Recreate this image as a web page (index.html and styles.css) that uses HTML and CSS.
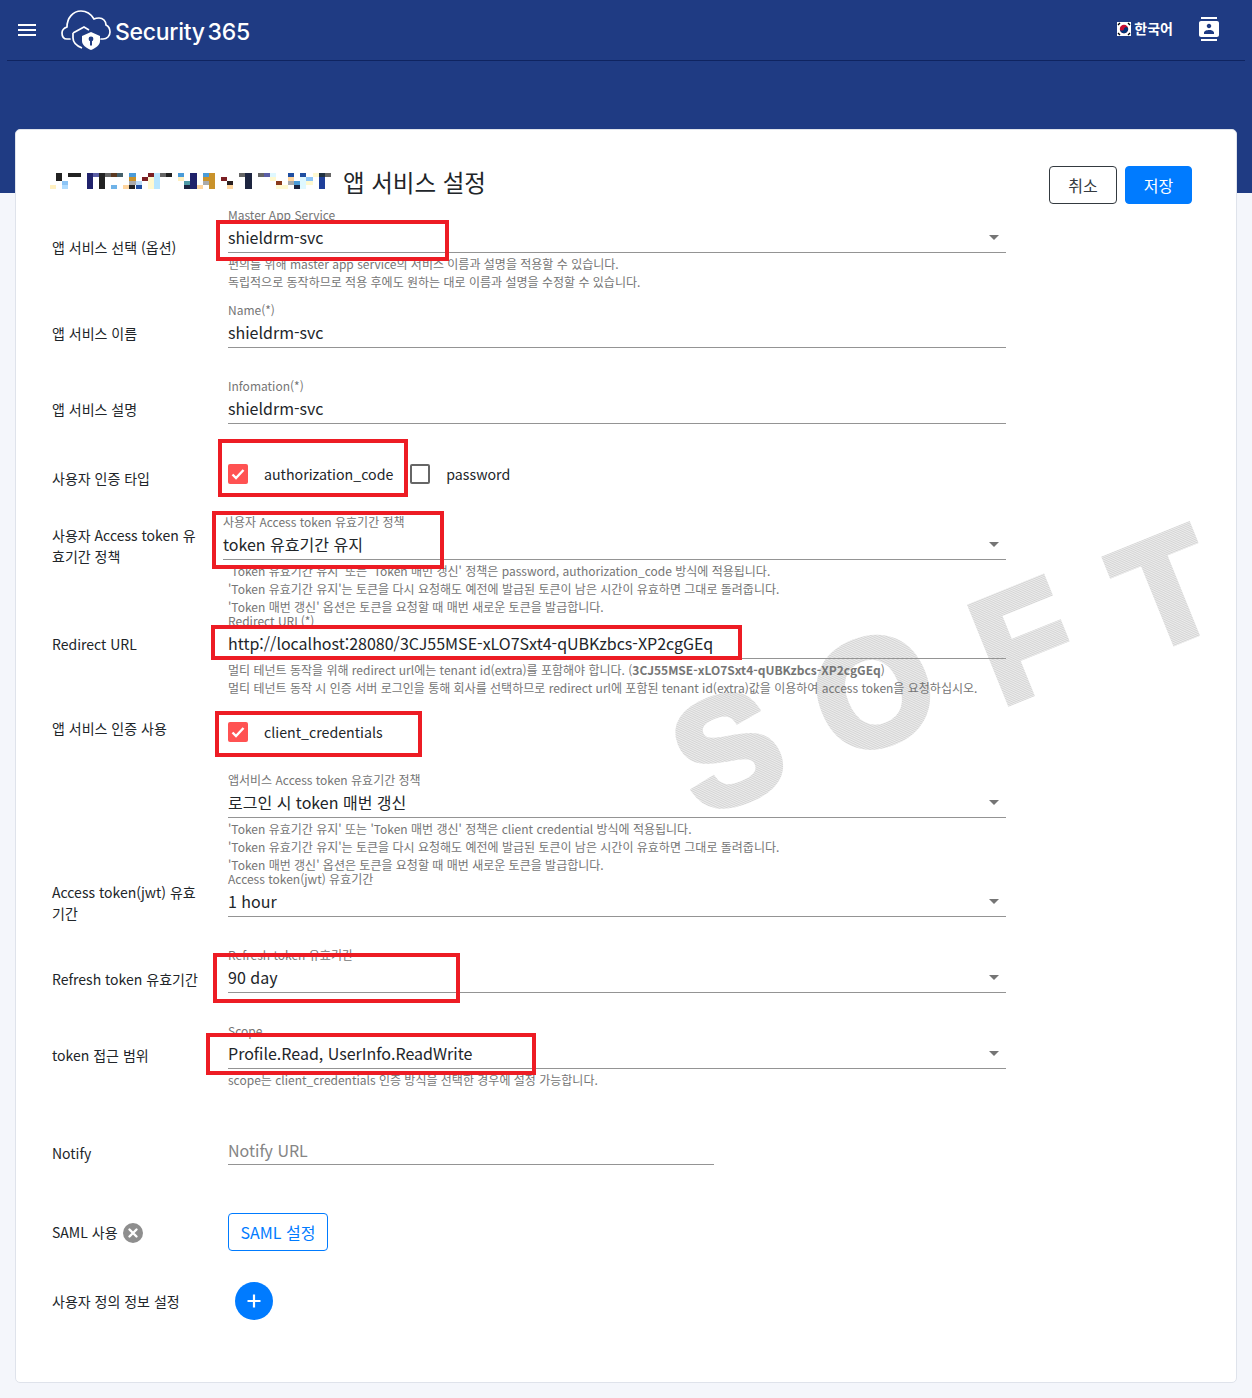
FILE: index.html
```html
<!DOCTYPE html>
<html lang="ko">
<head>
    <meta charset="UTF-8">
    <meta name="viewport" content="width=device-width, initial-scale=1.0">
    <title>Security365</title>
    <link rel="stylesheet" href="styles.css">
</head>
<body>
    <div class="banner">
        <header class="topbar">
            <div class="brand">
                <svg class="menu-icon" viewBox="0 0 24 24"><path fill="#fff" d="M3 18h18v-2H3v2zm0-5h18v-2H3v2zm0-7v2h18V6H3z"/></svg>
                <svg class="logo-icon" viewBox="0 0 50 40">
                    <path fill="none" stroke="#fff" stroke-width="1.7" stroke-linecap="round" d="M9 29H6C2.500 29 1 26 1 23c0-3 2-5 5-6C6 8 12 1 20 1c6 0 10 3 13 8 2-1 3-1 5-1 4 0 7 3 7 7 2 1 4 4 4 7 0 4-3 7-7 7h-2"/>
                    <path fill="none" stroke="#fff" stroke-width="1.7" d="M12 23l11-6 5 3M12 23v5c0 5 4 8 9 10"/>
                    <path fill="#fff" d="M30 22l9 4v5c0 4-4 7-9 9-5-2-9-5-9-9v-5z"/>
                    <circle cx="30" cy="29" r="2.400" fill="#1f3b83"/>
                    <rect x="29" y="29" width="2" height="6.500" fill="#1f3b83"/>
                </svg>
                <span class="logo-text">Security<span class="logo-num">365</span></span>
            </div>
            <div class="top-right">
                <svg class="flag" viewBox="0 0 14 14">
                    <rect width="14" height="14" fill="#fff"/>
                    <circle cx="7" cy="7" r="4.200" fill="#c60c30"/>
                    <path fill="#003478" d="M2.800 7a4.200 4.200 0 0 0 8.400 0c0-1-1-2-2.100-2S7 6 7 7 6 8.500 4.900 8.500 2.800 8 2.800 7z"/>
                    <path stroke="#000" stroke-width="1.400" d="M1 3l2-2M11 1l2 2M1 11l2 2M11 13l2-2"/>
                </svg>
                <span class="lang">한국어</span>
                <svg class="contact-icon" viewBox="0 0 24 24"><path fill="#fff" d="M20 0H4v2h16V0zM4 24h16v-2H4v2zM20 4H4c-1.100 0-2 .9-2 2v12c0 1.100.9 2 2 2h16c1.100 0 2-.9 2-2V6c0-1.100-.9-2-2-2zm-8 2.750c1.240 0 2.250 1.010 2.250 2.250s-1.010 2.250-2.250 2.250S9.750 10.240 9.750 9 10.760 6.750 12 6.750zM17 17H7v-1.500c0-1.670 3.330-2.500 5-2.500s5 .83 5 2.500V17z"/></svg>
            </div>
        </header>
    </div>

    <main class="card">
        <svg class="watermark" viewBox="0 0 600 400">
            <defs>
                <pattern id="hatch" width="2" height="1.700" patternUnits="userSpaceOnUse" patternTransform="rotate(-22)">
                    <rect width="2" height="1.200" fill="#d4d4d4"/>
                </pattern>
                <mask id="soft">
                    <g fill="#fff" stroke="#fff" stroke-width="7" font-family="'Liberation Sans', sans-serif" font-weight="700" font-size="150">
                        <text transform="translate(81 352) rotate(-22)">S</text>
                        <text transform="translate(219 297) rotate(-22)">O</text>
                        <text transform="translate(381 241) rotate(-22)">F</text>
                        <text transform="translate(523 190) rotate(-22)">T</text>
                    </g>
                </mask>
            </defs>
            <rect width="600" height="400" fill="url(#hatch)" mask="url(#soft)"/>
        </svg>

        <div class="title-bar">
            <h1 class="page-title">
                <svg class="blur-name" viewBox="0 0 282 18" shape-rendering="crispEdges">
                    <path fill="#222" d="M6 1h6v8H6zM18 1h13v4H18zM49 1h6v16h-6zM116 1h6v4h-6zM79 13h6v4h-6z"/>
                    <path fill="#20226b" d="M37 1h6v16h-6zM140 1h7v16h-7z"/>
                    <path fill="#1d2540" d="M195 1h7v16h-7zM244 13h6v4h-6zM134 13h6v4h-6z"/>
                    <path fill="#5b5ea6" d="M43 1h6v4h-6zM214 1h6v4h-6z"/>
                    <path fill="#666" d="M55 1h6v4h-6zM110 1h6v4h-6zM189 1h6v4h-6zM208 1h6v4h-6zM275 1h6v4h-6z"/>
                    <path fill="#5c3a22" d="M61 1h6v4h-6z"/>
                    <path fill="#44606a" d="M67 1h6v4h-6z"/>
                    <path fill="#4a9bd8" d="M79 1h7v4h-7zM128 1h6v4h-6zM153 1h6v4h-6zM244 9h6v4h-6z"/>
                    <path fill="#c9922b" d="M79 5h7v4h-7zM153 5h6v4h-6zM159 1h6v16h-6z"/>
                    <path fill="#aaa" d="M79 9h7v4h-7zM153 9h6v4h-6zM238 9h6v4h-6z"/>
                    <path fill="#bcdcf8" d="M86 9h6v4h-6z"/>
                    <path fill="#1f4ea1" d="M86 13h6v4h-6zM238 1h6v4h-6zM250 1h6v4h-6z"/>
                    <path fill="#6fb3e8" d="M61 13h6v4h-6z"/>
                    <path fill="#ffd59e" d="M73 13h6v4h-6zM147 13h6v4h-6zM177 13h6v4h-6zM238 5h6v4h-6z"/>
                    <path fill="#7b1f24" d="M98 1h6v4h-6zM92 5h6v4h-6zM171 5h6v4h-6z"/>
                    <path fill="#fff9d0" d="M98 5h6v12h-6zM220 5h6v4h-6zM226 13h12v4h-12zM256 9h7v4h-7zM263 1h6v4h-6z"/>
                    <path fill="#b8e6ff" d="M104 1h6v16h-6z"/>
                    <path fill="#dff8ff" d="M220 1h6v4h-6zM250 5h6v12h-6z"/>
                    <path fill="#fff0c0" d="M128 5h6v4h-6zM0 13h6v4H0z"/>
                    <path fill="#4d9aa5" d="M134 9h6v4h-6z"/>
                    <path fill="#8cc4f5" d="M12 9h6v4h-6zM256 5h7v4h-7z"/>
                    <path fill="#b0dcff" d="M12 13h6v4h-6z"/>
                    <path fill="#2a1f1f" d="M177 9h6v4h-6z"/>
                    <path fill="#8a3a1a" d="M226 9h6v4h-6z"/>
                    <path fill="#1f3040" d="M269 1h6v4h-6z"/>
                    <path fill="#1f3f9a" d="M269 5h6v12h-6z"/>
                </svg>
                <span>앱 서비스 설정</span>
            </h1>
            <div class="actions">
                <button class="btn btn-cancel">취소</button>
                <button class="btn btn-save">저장</button>
            </div>
        </div>

        <div class="row row-95">
            <div class="row-label">앱 서비스 선택 (옵션)</div>
            <div>
                <div class="field">
                    <span class="field-label">Master App Service</span>
                    <div class="field-value">shieldrm-svc<i class="arrow"></i></div>
                </div>
                <p class="help">편의를 위해 master app service의 서비스 이름과 설명을 적용할 수 있습니다.<br>독립적으로 동작하므로 적용 후에도 원하는 대로 이름과 설명을 수정할 수 있습니다.</p>
            </div>
        </div>

        <div class="row">
            <div class="row-label">앱 서비스 이름</div>
            <div class="field">
                <span class="field-label">Name(*)</span>
                <div class="field-value">shieldrm-svc</div>
            </div>
        </div>

        <div class="row">
            <div class="row-label">앱 서비스 설명</div>
            <div class="field">
                <span class="field-label">Infomation(*)</span>
                <div class="field-value">shieldrm-svc</div>
            </div>
        </div>

        <div class="row row-60">
            <div class="row-label label-check">사용자 인증 타입</div>
            <div class="checks">
                <span class="check-item">
                    <i class="checkbox checked"><svg viewBox="0 0 20 20"><path fill="none" stroke="#fff" stroke-width="2.400" d="M4.500 10.500l3.500 3.500 7.500-8"/></svg></i>authorization_code
                </span>
                <span class="check-item">
                    <i class="checkbox"></i>password
                </span>
            </div>
        </div>

        <div class="row row-99">
            <div class="row-label label-two">사용자 Access token 유효기간 정책</div>
            <div>
                <div class="field field-shift">
                    <span class="field-label">사용자 Access token 유효기간 정책</span>
                    <div class="field-value">token 유효기간 유지<i class="arrow"></i></div>
                </div>
                <p class="help">'Token 유효기간 유지' 또는 'Token 매번 갱신' 정책은 password, authorization_code 방식에 적용됩니다.<br>'Token 유효기간 유지'는 토큰을 다시 요청해도 예전에 발급된 토큰이 남은 시간이 유효하면 그대로 돌려줍니다.<br>'Token 매번 갱신' 옵션은 토큰을 요청할 때 매번 새로운 토큰을 발급합니다.</p>
            </div>
        </div>

        <div class="row row-98">
            <div class="row-label">Redirect URL</div>
            <div>
                <div class="field">
                    <span class="field-label">Redirect URL(*)</span>
                    <div class="field-value">http://localhost:28080/3CJ55MSE-xLO7Sxt4-qUBKzbcs-XP2cgGEq</div>
                </div>
                <p class="help">멀티 테넌트 동작을 위해 redirect url에는 tenant id(extra)를 포함해야 합니다. (<b>3CJ55MSE-xLO7Sxt4-qUBKzbcs-XP2cgGEq</b>)<br>멀티 테넌트 동작 시 인증 서버 로그인을 통해 회사를 선택하므로 redirect url에 포함된 tenant id(extra)값을 이용하여 access token을 요청하십시오.</p>
            </div>
        </div>

        <div class="row row-61">
            <div class="row-label label-top">앱 서비스 인증 사용</div>
            <div class="checks">
                <span class="check-item">
                    <i class="checkbox checked"><svg viewBox="0 0 20 20"><path fill="none" stroke="#fff" stroke-width="2.400" d="M4.500 10.500l3.500 3.500 7.500-8"/></svg></i>client_credentials
                </span>
            </div>
        </div>

        <div class="row row-99">
            <div class="row-label"></div>
            <div>
                <div class="field">
                    <span class="field-label">앱서비스 Access token 유효기간 정책</span>
                    <div class="field-value">로그인 시 token 매번 갱신<i class="arrow"></i></div>
                </div>
                <p class="help">'Token 유효기간 유지' 또는 'Token 매번 갱신' 정책은 client credential 방식에 적용됩니다.<br>'Token 유효기간 유지'는 토큰을 다시 요청해도 예전에 발급된 토큰이 남은 시간이 유효하면 그대로 돌려줍니다.<br>'Token 매번 갱신' 옵션은 토큰을 요청할 때 매번 새로운 토큰을 발급합니다.</p>
            </div>
        </div>

        <div class="row">
            <div class="row-label label-two">Access token(jwt) 유효기간</div>
            <div class="field">
                <span class="field-label">Access token(jwt) 유효기간</span>
                <div class="field-value">1 hour<i class="arrow"></i></div>
            </div>
        </div>

        <div class="row">
            <div class="row-label label-low">Refresh token 유효기간</div>
            <div class="field">
                <span class="field-label">Refresh token 유효기간</span>
                <div class="field-value">90 day<i class="arrow"></i></div>
            </div>
        </div>

        <div class="row row-96">
            <div class="row-label label-low">token 접근 범위</div>
            <div>
                <div class="field">
                    <span class="field-label">Scope</span>
                    <div class="field-value">Profile.Read, UserInfo.ReadWrite<i class="arrow"></i></div>
                </div>
                <p class="help">scope는 client_credentials 인증 방식을 선택한 경우에 설정 가능합니다.</p>
            </div>
        </div>

        <div class="row row-93">
            <div class="row-label label-notify">Notify</div>
            <div class="field field-short">
                <span class="field-label"></span>
                <div class="field-value placeholder">Notify URL</div>
            </div>
        </div>

        <div class="row row-69">
            <div class="row-label label-saml">SAML 사용
                <svg class="saml-off" viewBox="0 0 20 20"><circle cx="10" cy="10" r="10" fill="#8e8e8e"/><path stroke="#fff" stroke-width="2.400" stroke-linecap="round" d="M6.500 6.500l7 7M13.500 6.500l-7 7"/></svg>
            </div>
            <div><button class="btn btn-saml">SAML 설정</button></div>
        </div>

        <div class="row row-60">
            <div class="row-label label-custom">사용자 정의 정보 설정</div>
            <div><button class="btn-add"><svg viewBox="0 0 38 38"><path stroke="#fff" stroke-width="2.200" d="M19 12.500v13M12.500 19h13"/></svg></button></div>
        </div>

        <i class="mark mark-1"></i>
        <i class="mark mark-2"></i>
        <i class="mark mark-3"></i>
        <i class="mark mark-4"></i>
        <i class="mark mark-5"></i>
        <i class="mark mark-6"></i>
        <i class="mark mark-7"></i>
    </main>
</body>
</html>
```

FILE: styles.css
```css
* {
    box-sizing: border-box;
}
html, body {
    margin: 0;
    padding: 0;
}
body {
    height: 1398px;
    overflow: hidden;
    background: #f4f6fb;
    color: #212529;
    font-family: "Noto Sans CJK KR", "Noto Sans", sans-serif;
    font-size: 14px;
}
.banner {
    height: 193px;
    padding: 0 7px;
    background: #1f3b83;
}
.topbar {
    display: flex;
    justify-content: space-between;
    align-items: center;
    height: 61px;
    border-bottom: 1px solid #0f2460;
}
.brand {
    display: flex;
    align-items: center;
}
.menu-icon {
    width: 24px;
    height: 24px;
    margin-left: 8px;
}
.logo-icon {
    width: 50px;
    height: 40px;
    margin-left: 22px;
}
.logo-text {
    margin: 4px 0 0 4px;
    color: #fff;
    font-family: Inter, sans-serif;
    font-size: 23px;
    font-weight: 500;
    letter-spacing: -0.3px;
}
.logo-num {
    margin-left: 3px;
}
.top-right {
    display: flex;
    align-items: center;
    padding: 0 24px 2px 0;
}
.flag {
    width: 14px;
    height: 14px;
}
.lang {
    margin: -2px 0 0 3px;
    color: #fff;
    font-size: 14px;
    font-weight: 700;
}
.contact-icon {
    width: 24px;
    height: 24px;
    margin-left: 24px;
}

.card {
    position: relative;
    width: 1222px;
    height: 1254px;
    margin: -64px 0 0 15px;
    padding: 36px 0 0 36px;
    background: #fff;
    border: 1px solid #dfe3eb;
    border-radius: 5px;
}
.watermark {
    position: absolute;
    left: 604px;
    top: 335px;
    width: 600px;
    height: 400px;
}
.title-bar {
    position: relative;
    display: flex;
    justify-content: space-between;
    align-items: flex-start;
    height: 42px;
    padding-right: 44px;
}
.page-title {
    display: flex;
    align-items: center;
    margin: 0;
    font-size: 23.5px;
    font-weight: 400;
    line-height: 32px;
}
.blur-name {
    width: 282px;
    height: 18px;
    margin: -2px 11px 0 -2px;
}
.actions {
    display: flex;
    gap: 8px;
}
.btn {
    height: 38px;
    padding: 0;
    border-radius: 4px;
    background: #fff;
    font-family: inherit;
    font-size: 16px;
}
.btn-cancel {
    width: 68px;
    border: 1px solid #343a40;
    color: #343a40;
}
.btn-save {
    width: 67px;
    border: 1px solid #007bff;
    background: #007bff;
    color: #fff;
}
.btn-saml {
    width: 100px;
    border: 1px solid #007bff;
    color: #007bff;
}
.btn-add {
    display: block;
    width: 38px;
    height: 38px;
    margin-left: 7px;
    padding: 0;
    border: 0;
    border-radius: 50%;
    background: #007bff;
}

.row {
    position: relative;
    display: grid;
    grid-template-columns: 176px 778px;
    height: 76px;
}
.row-60 { height: 60px; }
.row-61 { height: 61px; }
.row-69 { height: 69px; }
.row-93 { height: 93px; }
.row-95 { height: 95px; }
.row-96 { height: 96px; }
.row-98 { height: 98px; }
.row-99 { height: 99px; }
.row-label {
    padding: 20px 20px 0 0;
    font-size: 14px;
    line-height: 21px;
}
.row-95 > .row-label { padding-top: 29px; }
.label-check { padding-top: 13px; }
.label-two { padding-top: 10px; }
.label-low { padding-top: 21px; }
.label-top { padding-top: 6px; }
.label-notify { padding-top: 23px; }
.label-saml {
    display: flex;
    align-items: center;
    gap: 5px;
    align-self: start;
    padding: 9px 0 0;
}
.label-custom { padding-top: 9px; }
.saml-off {
    width: 20px;
    height: 20px;
}

.field {
    height: 45px;
    border-bottom: 1px solid #949494;
}
.field-shift {
    margin-left: -5px;
}
.field-short {
    width: 486px;
}
.field-label {
    display: block;
    height: 15px;
    padding-bottom: 1px;
    color: #757575;
    font-size: 12px;
    line-height: 13px;
}
.field-value {
    position: relative;
    height: 29px;
    color: #212529;
    font-size: 16px;
    line-height: 29px;
}
.placeholder {
    padding-top: 1px;
    color: #858585;
}
.arrow {
    position: absolute;
    right: 7px;
    top: 12px;
    border-top: 5px solid #757575;
    border-left: 5px solid transparent;
    border-right: 5px solid transparent;
}
.help {
    margin: 2px 0 0;
    color: #757575;
    font-size: 12px;
    line-height: 18px;
}
.help b {
    font-weight: 700;
}

.checks {
    display: flex;
    padding-top: 10px;
}
.row-60 > .checks {
    padding-top: 9px;
}
.check-item {
    display: flex;
    align-items: flex-start;
    height: 20px;
    margin-right: 17px;
    font-size: 14.2px;
    line-height: 20px;
}
.checkbox {
    display: block;
    width: 20px;
    height: 20px;
    margin-right: 16px;
    border: 2px solid #666;
    border-radius: 2px;
}
.checkbox.checked {
    border: 0;
    background: #ff5252;
}
.checkbox svg {
    display: block;
}

.mark {
    position: absolute;
    border: 4px solid #ed1c24;
}
.mark-1 { left: 200px; top: 90px; width: 233px; height: 41px; }
.mark-2 { left: 202px; top: 309px; width: 190px; height: 58px; }
.mark-3 { left: 196px; top: 381px; width: 232px; height: 58px; }
.mark-4 { left: 195px; top: 495px; width: 531px; height: 35px; }
.mark-5 { left: 199px; top: 581px; width: 207px; height: 46px; }
.mark-6 { left: 197px; top: 823px; width: 247px; height: 50px; }
.mark-7 { left: 190px; top: 903px; width: 330px; height: 42px; }
```
